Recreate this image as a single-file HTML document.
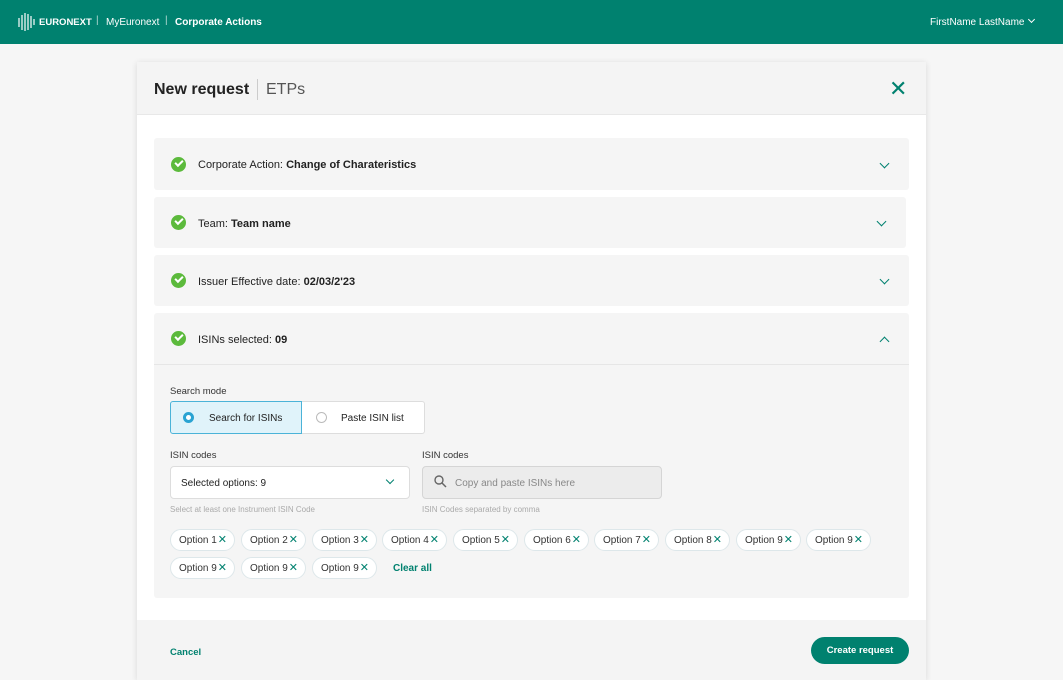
<!DOCTYPE html>
<html><head><style>
*{box-sizing:border-box;margin:0;padding:0}
html,body{width:1063px;height:680px;overflow:hidden}
body{background:#f6f6f6;font-family:"Liberation Sans",sans-serif;color:#222;position:relative}
.hdr{position:absolute;left:0;top:0;width:1063px;height:44px;background:#00816f;color:#fff;font-size:10px}
.hdr span{position:absolute;top:17px}
.modal{position:absolute;left:137px;top:62px;width:789px;height:618px;background:#fff;box-shadow:0 1px 6px rgba(0,0,0,.12)}
.mh{position:absolute;left:0;top:0;width:789px;height:53px;background:#f4f4f4;border-bottom:1px solid #e8e8e8}
.mf{position:absolute;left:0;top:558px;width:789px;height:60px;background:#f4f4f4}
.p{position:absolute;left:17px;width:755px;background:#f5f5f5;border-radius:3px;font-size:11px}
.p .ck{position:absolute;left:17px;width:15px;height:15px;border-radius:50%;background:#5cba3c}
.p .ck:after{content:"";position:absolute;left:4px;top:3px;width:6px;height:3px;border-left:2px solid #fff;border-bottom:2px solid #fff;transform:rotate(-45deg)}
.p .t{position:absolute;left:44px;top:21px}
.chev{position:absolute;width:7px;height:7px;border-right:1.8px solid #00816f;border-bottom:1.8px solid #00816f;transform:rotate(45deg)}
.lbl{position:absolute;font-size:9.5px;color:#333}
.hint{position:absolute;font-size:8px;color:#aaa}
.chip{position:absolute;height:22px;border:1px solid #dde7ea;border-radius:11px;background:#fff;font-size:10px;line-height:21px;padding-left:8px;color:#333}
.chip b{position:absolute;right:7px;top:0;color:#00816f;font-weight:normal;font-size:11px}
</style></head><body>
<div class="hdr">
<svg style="position:absolute;left:17px;top:12px" width="19" height="20"><g stroke="#fff" stroke-width="1.2"><line x1="2" y1="6" x2="2" y2="15"/><line x1="5" y1="3" x2="5" y2="18"/><line x1="8" y1="1" x2="8" y2="19"/><line x1="11" y1="2" x2="11" y2="18"/><line x1="14" y1="4" x2="14" y2="16"/><line x1="17" y1="7" x2="17" y2="13"/></g></svg>
<span style="left:39px;font-weight:bold;font-size:9.5px">EURONEXT</span>
<span style="left:96px;top:15px;opacity:.7">|</span>
<span style="left:106px">MyEuronext</span>
<span style="left:165px;top:15px;opacity:.7">|</span>
<span style="left:175px;font-weight:bold">Corporate Actions</span>
<span style="left:930px">FirstName LastName</span>
<div class="chev" style="left:1029px;top:17px;width:5px;height:5px;border-color:#fff;border-width:1.2px"></div>
</div>
<div class="modal">
<div class="mh">
<div style="position:absolute;left:17px;top:19px;font-size:16px;font-weight:bold;color:#222">New request</div>
<div style="position:absolute;left:120px;top:17px;width:1px;height:21px;background:#ccc"></div>
<div style="position:absolute;left:129px;top:19px;font-size:16px;color:#555">ETPs</div>
<div style="position:absolute;left:752px;top:18px;font-size:22px;color:#00816f;line-height:18px">✕</div>
</div>
<div class="p" style="top:76px;height:52px"><div class="ck" style="top:19px"></div><div class="t" style="top:21px">Corporate Action: <b>Change of Charateristics</b></div><div class="chev" style="left:727px;top:22px"></div></div>
<div class="p" style="top:135px;height:51px;width:752px"><div class="ck" style="top:18px"></div><div class="t">Team: <b>Team name</b></div><div class="chev" style="left:724px;top:21px"></div></div>
<div class="p" style="top:193px;height:51px"><div class="ck" style="top:18px"></div><div class="t">Issuer Effective date: <b>02/03/2'23</b></div><div class="chev" style="left:727px;top:21px"></div></div>
<div class="p" style="top:251px;height:285px">
<div style="position:absolute;left:0;top:51px;width:755px;height:1px;background:#e6e6e6"></div>
<div class="ck" style="top:18px"></div><div class="t">ISINs selected: <b>09</b></div><div class="chev" style="left:727px;top:25px;transform:rotate(225deg)"></div>
<div class="lbl" style="left:16px;top:73px">Search mode</div>
<div style="position:absolute;left:16px;top:88px;width:132px;height:33px;background:#e0f3fa;border:1.5px solid #4bb3d8;border-radius:3px 0 0 3px"></div>
<div style="position:absolute;left:148px;top:88px;width:123px;height:33px;background:#fff;border:1.5px solid #ddd;border-left:none;border-radius:0 3px 3px 0"></div>
<div style="position:absolute;left:29px;top:99px;width:11px;height:11px;border:3px solid #2aa3d2;border-radius:50%;background:#fff"></div>
<div style="position:absolute;left:55px;top:100px;font-size:10px">Search for ISINs</div>
<div style="position:absolute;left:162px;top:99px;width:11px;height:11px;border:1px solid #bbb;border-radius:50%"></div>
<div style="position:absolute;left:187px;top:100px;font-size:10px">Paste ISIN list</div>
<div class="lbl" style="left:16px;top:137px">ISIN codes</div>
<div style="position:absolute;left:16px;top:153px;width:240px;height:33px;background:#fff;border:1.5px solid #ddd;border-radius:4px"></div>
<div style="position:absolute;left:27px;top:165px;font-size:10px">Selected options: 9</div>
<div class="chev" style="left:233px;top:164px;width:6px;height:6px"></div>
<div class="hint" style="left:16px;top:192px">Select at least one Instrument ISIN Code</div>
<div class="lbl" style="left:268px;top:137px">ISIN codes</div>
<div style="position:absolute;left:268px;top:153px;width:240px;height:33px;background:#ececec;border:1.5px solid #d5d5d5;border-radius:4px"></div>
<svg style="position:absolute;left:280px;top:162px" width="13" height="13"><circle cx="5" cy="5" r="4" fill="none" stroke="#666" stroke-width="1.4"/><line x1="8" y1="8" x2="12" y2="12" stroke="#666" stroke-width="1.5"/></svg>
<div style="position:absolute;left:301px;top:165px;font-size:10px;color:#888">Copy and paste ISINs here</div>
<div class="hint" style="left:268px;top:192px">ISIN Codes separated by comma</div>
<div class="chip" style="left:16px;top:216px;width:65px">Option 1<b>✕</b></div>
<div class="chip" style="left:87px;top:216px;width:65px">Option 2<b>✕</b></div>
<div class="chip" style="left:158px;top:216px;width:65px">Option 3<b>✕</b></div>
<div class="chip" style="left:228px;top:216px;width:65px">Option 4<b>✕</b></div>
<div class="chip" style="left:299px;top:216px;width:65px">Option 5<b>✕</b></div>
<div class="chip" style="left:370px;top:216px;width:65px">Option 6<b>✕</b></div>
<div class="chip" style="left:440px;top:216px;width:65px">Option 7<b>✕</b></div>
<div class="chip" style="left:511px;top:216px;width:65px">Option 8<b>✕</b></div>
<div class="chip" style="left:582px;top:216px;width:65px">Option 9<b>✕</b></div>
<div class="chip" style="left:652px;top:216px;width:65px">Option 9<b>✕</b></div>
<div class="chip" style="left:16px;top:244px;width:65px">Option 9<b>✕</b></div>
<div class="chip" style="left:87px;top:244px;width:65px">Option 9<b>✕</b></div>
<div class="chip" style="left:158px;top:244px;width:65px">Option 9<b>✕</b></div>
<div style="position:absolute;left:239px;top:250px;font-size:10px;font-weight:bold;color:#00816f">Clear all</div>
</div>
<div class="mf">
<div style="position:absolute;left:33px;top:27px;font-size:9.5px;font-weight:bold;color:#00816f">Cancel</div>
<div style="position:absolute;left:674px;top:17px;width:98px;height:27px;border-radius:14px;background:#00816f;color:#fff;font-size:9.5px;font-weight:bold;text-align:center;line-height:27px">Create request</div>
</div>
</div>
</body></html>
